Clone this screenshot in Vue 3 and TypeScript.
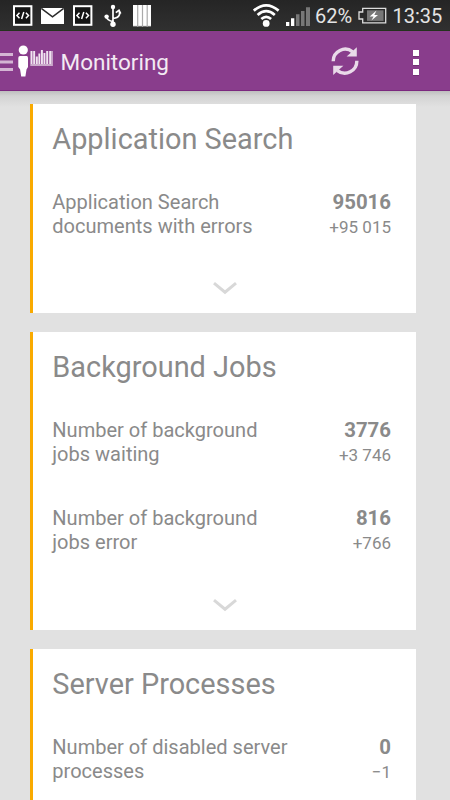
<script setup lang="ts">
interface Metric {
  lines: string[]
  value: string
  delta: string
}

interface Card {
  title: string
  metrics: Metric[]
}

const cards: Card[] = [
  {
    title: 'Application Search',
    metrics: [
      { lines: ['Application Search', 'documents with errors'], value: '95016', delta: '+95 015' },
    ],
  },
  {
    title: 'Background Jobs',
    metrics: [
      { lines: ['Number of background', 'jobs waiting'], value: '3776', delta: '+3 746' },
      { lines: ['Number of background', 'jobs error'], value: '816', delta: '+766' },
    ],
  },
  {
    title: 'Server Processes',
    metrics: [
      { lines: ['Number of disabled server', 'processes'], value: '0', delta: '−1' },
    ],
  },
]
</script>

<template>
  <div class="screen">
    <div class="status">
      <svg class="notifications" width="160" height="31" viewBox="0 0 160 31">
        <g v-for="x in [13, 73]" :key="x" :transform="`translate(${x} 5)`" fill="none" stroke="#fff">
          <rect x="1" y="1.2" width="17.4" height="18.6" fill="#151515" stroke-width="2" />
          <path d="M6.5 7.8 3.9 10.5 6.5 13.2M12.9 7.8 15.5 10.5 12.9 13.2M10.8 7 8.6 14" stroke-width="1.5" />
        </g>
        <rect x="41" y="8" width="23" height="16" fill="#fff" />
        <path d="M41.3 8.3 52.5 16.8 63.7 8.3" fill="none" stroke="#2a2a2a" stroke-width="1.5" />
        <g fill="none" stroke="#fff" stroke-width="1.7">
          <path d="M113 7V24M106.5 16.5Q107 20.5 113 21.5M119.5 12V14.5Q118.5 18 113 18.5" />
          <path d="M115.8 12.6 119 10.3 120.7 13.7" />
        </g>
        <g fill="#fff">
          <circle cx="113" cy="7" r="2.2" />
          <circle cx="106.6" cy="16.6" r="2.2" />
          <circle cx="113" cy="24.3" r="2.7" />
        </g>
        <rect x="133" y="5" width="18" height="21" fill="#fff" />
        <path d="M137.7 5V27M142.5 5V27M147.2 5V27" stroke="#aaa" stroke-width="1.2" />
        <path d="M133 26.3H151" stroke="#999" stroke-width="0.8" />
      </svg>
      <div class="system">
        <svg class="signals" width="62" height="31" viewBox="0 0 62 31">
          <g fill="none" stroke="#fff" stroke-width="2.7">
            <path d="M0.8 10.6Q13.2 0.2 25.6 10.6" />
            <path d="M4.6 15Q13.2 7.4 21.8 15" />
            <path d="M8.3 19Q13.2 14.6 18.1 19" />
          </g>
          <circle cx="13.2" cy="23.4" r="3.4" fill="#fff" />
          <path d="M33 22H36.3V26H33ZM38 18.3H41.3V26H38Z" fill="#fff" />
          <path d="M43 14.3H46.5V26H43ZM48 11H51.5V26H48ZM53 7.3H57V26H53Z" fill="#777" />
        </svg>
        <span class="percent">62%</span>
        <svg class="battery" width="30" height="31" viewBox="0 0 30 31">
          <path d="M4.7 8.4H27.7V22.8H4.7V19H1V12H4.7Z" fill="none" stroke="#ddd" stroke-width="1.3" />
          <rect x="9" y="10.3" width="16.5" height="10.6" fill="#777" />
          <path d="M18.5 10.5 11.7 16.4H15.6L13.4 20.4 20 15H16.3Z" fill="#fff" />
        </svg>
        <span class="clock">13:35</span>
      </div>
    </div>

    <header class="bar">
      <svg class="brand" width="54" height="59" viewBox="0 0 54 59">
        <path d="M0 23.6H13M0 31.1H13M0 38.6H13" stroke="#d4b5d4" stroke-width="3" />
        <circle cx="23.3" cy="19" r="4.6" fill="#fff" />
        <path d="M20 25H26.7Q28 25 28 27V36L26.5 38.5 25.4 45.5H21.2L20.1 38.5 18.3 36V27Q18.3 25 20 25Z" fill="#fff" />
        <g fill="#f0e4f0">
          <path d="M30.5 20H32.5V33H30.5ZM33.2 20H35.1V33H33.2ZM35.8 25.5H37.8V33H35.8ZM38.4 22.5H40.2V33H38.4ZM40.9 19H42.9V33H40.9ZM43.5 22H45.4V33H43.5ZM46.2 20H48.2V33H46.2ZM49.2 20H51.4V33H49.2Z" />
        </g>
        <path d="M30.3 34H52V20" fill="none" stroke="#cbaacb" stroke-width="1.8" />
      </svg>
      <h1 class="heading">Monitoring</h1>
      <svg class="refresh" width="30" height="30" viewBox="0 0 30 30">
        <g fill="none" stroke="#e9dae9" stroke-width="3.4">
          <path d="M3.2 15.3A12 12 0 0 1 22.6 5.8" />
          <path d="M26.8 14.7A12 12 0 0 1 7.4 24.6" />
        </g>
        <path d="M26.8 1.2V10.4H16.6L20 7.4ZM3.2 29V19.8H13.4L10 22.8Z" fill="#e9dae9" />
      </svg>
      <div class="overflow"><i></i><i></i><i></i></div>
    </header>

    <main class="content">
      <section v-for="card in cards" :key="card.title" class="card">
        <h2 class="title">{{ card.title }}</h2>
        <div v-for="metric in card.metrics" :key="metric.lines.join(' ')" class="metric">
          <div class="label">
            <div v-for="line in metric.lines" :key="line">{{ line }}</div>
          </div>
          <div class="figures">
            <div class="value">{{ metric.value }}</div>
            <div class="delta">{{ metric.delta }}</div>
          </div>
        </div>
        <svg class="chevron" width="24" height="14" viewBox="0 0 24 14">
          <path d="M1 2.2 12 11.2 23 2.2" fill="none" stroke="#d8d8d8" stroke-width="3" />
        </svg>
      </section>
    </main>
  </div>
</template>

<style>
body {
  margin: 0;
  overflow: hidden;
}
</style>

<style scoped>
.screen {
  width: 450px;
  height: 800px;
  overflow: hidden;
  display: flex;
  flex-direction: column;
  background: #e1e1e1;
  font-family: Roboto, sans-serif;
  color: #8a8a8a;
}
.status {
  flex: none;
  display: flex;
  justify-content: space-between;
  box-sizing: border-box;
  height: 31px;
  background: linear-gradient(#252525, #303030);
  border-bottom: 1px solid #24331e;
  color: #e4e4e4;
}
.status svg {
  flex: none;
}
.system {
  display: flex;
  width: 197px;
  line-height: 33px;
  font-size: 20px;
  white-space: nowrap;
}
.percent {
  width: 43px;
}
.clock {
  margin-left: 4.5px;
}
.bar {
  flex: none;
  display: flex;
  align-items: center;
  box-sizing: border-box;
  height: 60px;
  padding-right: 31px;
  background: #893d8c;
  border-bottom: 1px solid #7c287f;
}
.heading {
  flex: 1;
  margin: 0 0 0 6.5px;
  font-size: 22.5px;
  font-weight: 400;
  line-height: 30px;
  color: #f3eaf3;
  padding-top: 2px;
}
.refresh {
  margin-top: 1px;
}
.overflow {
  display: flex;
  flex-direction: column;
  gap: 3.5px;
  margin: 3px 0 0 53px;
}
.overflow i {
  width: 6px;
  height: 6px;
  background: #fff;
  box-shadow: 0 1px 0 #713074;
}
.content {
  flex: 1;
  display: flex;
  flex-direction: column;
  gap: 19px;
  padding: 13px 34px 0 30px;
  background: linear-gradient(#bebebe, #d3d3d3 5px, #e1e1e1 16px);
}
.card {
  flex: none;
  display: flex;
  flex-direction: column;
  box-sizing: border-box;
  padding: 18px 25px 0 19.3px;
  border-left: 3px solid #f9aa00;
  background: #fff;
}
.title {
  margin: 0 0 34px;
  font-size: 28.9px;
  font-weight: 400;
  line-height: 34px;
}
.metric {
  display: flex;
  justify-content: space-between;
  height: 48px;
  margin-bottom: 40.4px;
  font-size: 20.05px;
  line-height: 24px;
}
.metric + .metric {
  margin-bottom: 41px;
}
.figures {
  text-align: right;
}
.value {
  font-size: 20.4px;
  font-weight: 700;
}
.delta {
  font-size: 17px;
  line-height: 27px;
}
.chevron {
  margin: 3px 0 17.6px 160.5px;
}
</style>
